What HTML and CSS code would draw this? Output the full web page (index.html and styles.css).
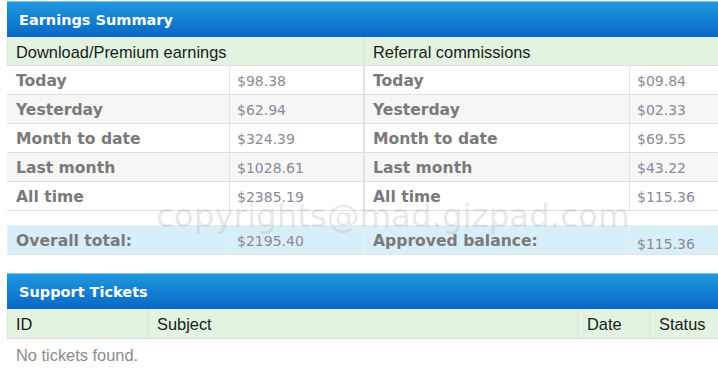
FILE: index.html
```html
<!DOCTYPE html>
<html>
<head>
<meta charset="utf-8">
<link rel="stylesheet" href="styles.css">
</head>
<body>
<div class="page">
  <section class="panel">
    <h2 class="panel-head">Earnings Summary</h2>
    <div class="grid earn">
      <div class="cell sub span2">Download/Premium earnings</div>
      <div class="cell sub span2">Referral commissions</div>

      <div class="cell label">Today</div><div class="cell value">$98.38</div>
      <div class="cell label">Today</div><div class="cell value">$09.84</div>

      <div class="cell label alt">Yesterday</div><div class="cell value alt">$62.94</div>
      <div class="cell label alt">Yesterday</div><div class="cell value alt">$02.33</div>

      <div class="cell label">Month to date</div><div class="cell value">$324.39</div>
      <div class="cell label">Month to date</div><div class="cell value">$69.55</div>

      <div class="cell label alt">Last month</div><div class="cell value alt">$1028.61</div>
      <div class="cell label alt">Last month</div><div class="cell value alt">$43.22</div>

      <div class="cell label">All time</div><div class="cell value">$2385.19</div>
      <div class="cell label">All time</div><div class="cell value">$115.36</div>
    </div>
    <div class="grid earn totals">
      <div class="cell label tot">Overall total:</div><div class="cell value tot">$2195.40</div>
      <div class="cell label tot">Approved balance:</div><div class="cell value tot low">$115.36</div>
    </div>
  </section>

  <section class="panel tickets-panel">
    <h2 class="panel-head">Support Tickets</h2>
    <div class="grid tickets">
      <div class="cell sub th">ID</div>
      <div class="cell sub th">Subject</div>
      <div class="cell sub th">Date</div>
      <div class="cell sub th">Status</div>
      <div class="cell empty">No tickets found.</div>
    </div>
  </section>

  <div class="watermark">copyrights@mad.gizpad.com</div>
</div>
</body>
</html>
```

FILE: styles.css
```css
html, body {
  margin: 0;
  padding: 0;
  background: #ffffff;
  overflow: hidden;
}

.page {
  position: relative;
  width: 714px;
  padding: 1px 0 0 7px;
}

.panel {
  width: 714px;
}

.panel-head {
  margin: 0;
  height: 36px;
  box-sizing: border-box;
  border-top: 1px solid #7cc0ec;
  padding: 1px 12px 0;
  display: flex;
  align-items: center;
  background: linear-gradient(#1f98df, #0b67c5);
  color: #ffffff;
  font-family: "DejaVu Sans", Verdana, sans-serif;
  font-weight: bold;
  font-size: 14.5px;
}

.grid {
  display: grid;
}

.earn {
  grid-template-columns: 223px 134px 266px 91px;
}

.cell {
  box-sizing: border-box;
  height: 29px;
  display: flex;
  align-items: center;
  padding-top: 2px;
  border-bottom: 1px solid #dedede;
  border-right: 1px solid #e2e2e2;
  white-space: nowrap;
  overflow: hidden;
}

.span2 {
  grid-column: span 2;
}

.sub {
  background: #e3f3e1;
  color: #1a1a1a;
  font-family: "Liberation Sans", Arial, sans-serif;
  font-size: 16.4px;
  padding-left: 9px;
  border-right-color: #d6e6d4;
}

.earn .sub:first-child {
  padding-left: 10px;
}

.label {
  padding-left: 9px;
  font-family: "DejaVu Sans", Verdana, sans-serif;
  font-weight: bold;
  font-size: 15.6px;
  color: #7a7a7a;
  background: #ffffff;
}

.value {
  padding-left: 7px;
  font-family: "DejaVu Sans", Verdana, sans-serif;
  font-size: 14px;
  color: #8a8a98;
  background: #ffffff;
}

.earn > .cell:nth-child(4n+1) {
  border-left: 1px solid #e2e2e2;
  padding-left: 8px;
}

.earn > .sub:nth-child(1) {
  border-left: 1px solid #d6e6d4;
}

.alt {
  background: #f6f6f6;
}

.totals {
  margin-top: 14px;
  border-top: 1px solid #e4eef3;
}

.tot {
  background: #d8eef9;
  height: 29px;
  border-bottom-color: #dde6ea;
  border-right-color: #e8f1f5;
}

.totals > .cell:nth-child(4n+1) {
  border-left-color: #e8f1f5;
}

.low {
  padding-top: 7px;
}

.tickets-panel {
  margin-top: 18px;
}

.tickets {
  grid-template-columns: 141px 430px 72px 71px;
}

.th {
  height: 30px;
  padding-left: 9px;
}

.tickets .th:first-child {
  border-left: 1px solid #d6e6d4;
  padding-left: 8px;
}

.empty {
  grid-column: span 4;
  height: 31px;
  border: none;
  padding-left: 9px;
  font-family: "Liberation Sans", Arial, sans-serif;
  font-size: 16.4px;
  color: #8c8c8c;
}

.watermark {
  position: absolute;
  left: 156px;
  top: 197px;
  font-family: "DejaVu Sans", Verdana, sans-serif;
  font-size: 32.5px;
  color: rgba(150, 150, 150, 0.22);
  white-space: nowrap;
  pointer-events: none;
}
```
